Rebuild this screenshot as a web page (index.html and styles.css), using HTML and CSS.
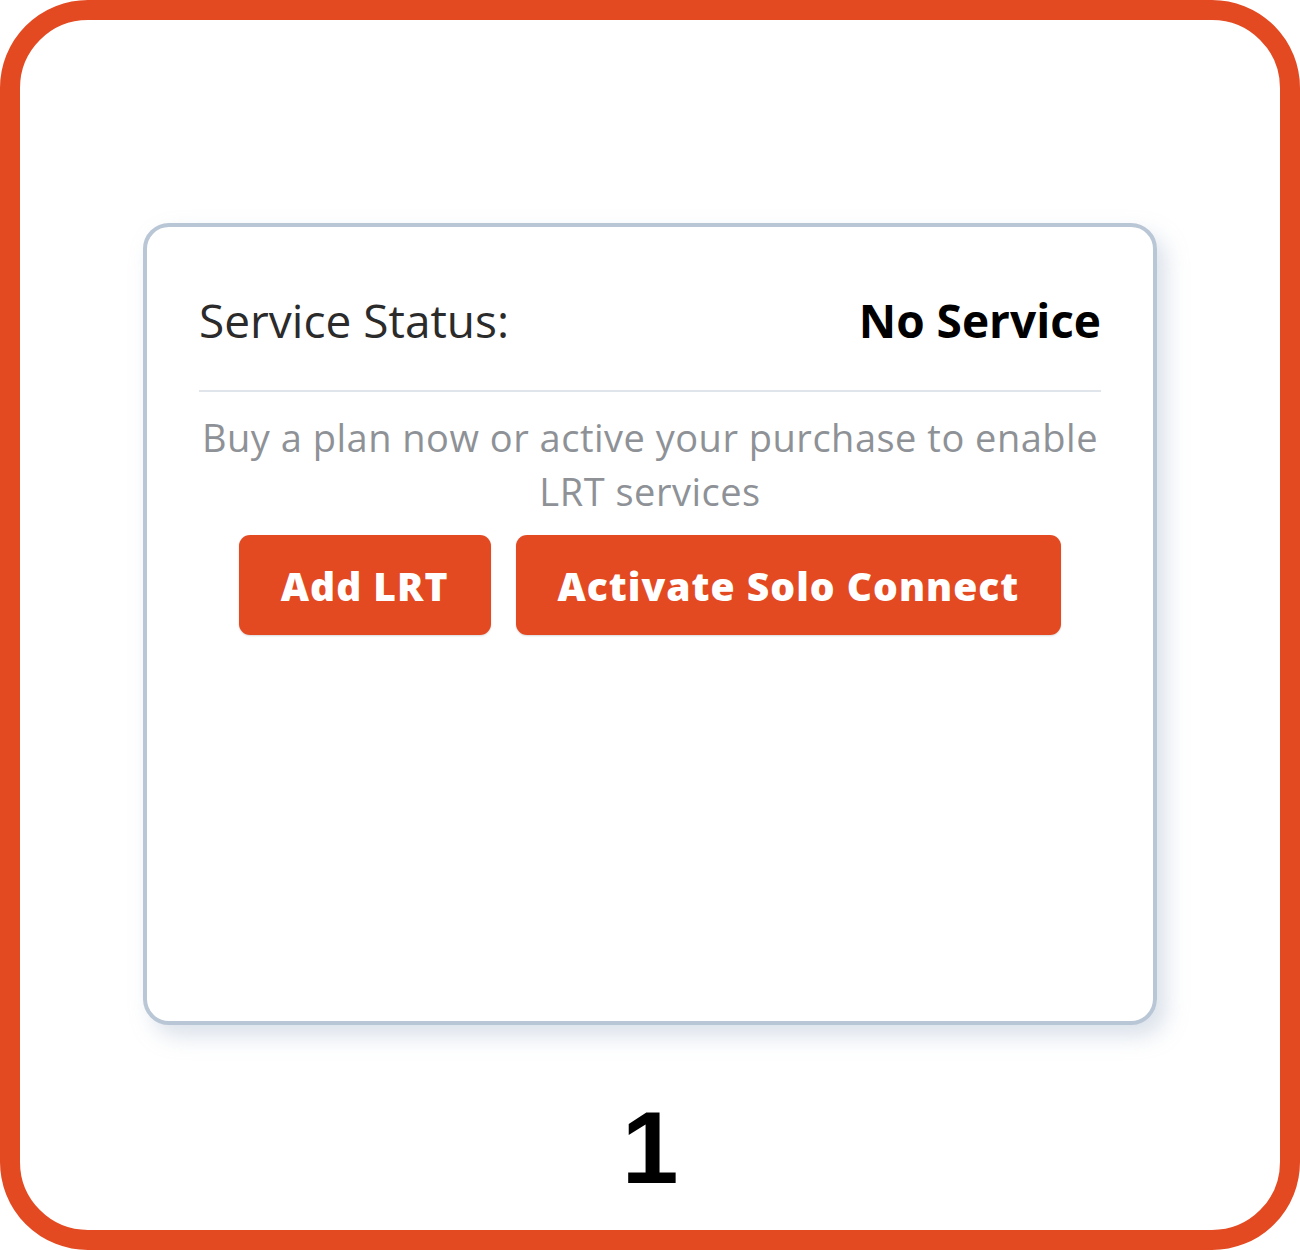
FILE: index.html
```html
<!DOCTYPE html>
<html>
<head>
<meta charset="utf-8">
<link rel="stylesheet" href="styles.css">
</head>
<body>
<div class="frame">
  <div class="card">
    <div class="status-row">
      <span class="status-label">Service Status:</span>
      <span class="status-value">No Service</span>
    </div>
    <div class="divider"></div>
    <p class="message">Buy a plan now or active your purchase to enable LRT services</p>
    <div class="actions">
      <button class="btn">Add LRT</button>
      <button class="btn">Activate Solo Connect</button>
    </div>
  </div>
  <div class="step">1</div>
</div>
</body>
</html>
```

FILE: styles.css
```css
html, body {
  margin: 0;
  padding: 0;
  background: #ffffff;
}

.frame {
  box-sizing: border-box;
  width: 1300px;
  height: 1250px;
  border: 20px solid #e34a22;
  border-radius: 88px;
  display: flex;
  flex-direction: column;
  align-items: center;
  padding-top: 203px;
}

.card {
  box-sizing: border-box;
  width: 1014px;
  height: 802px;
  border: 4px solid #b9c6d5;
  border-radius: 26px;
  box-shadow: 9px 11px 22px rgba(150, 170, 195, 0.35);
  padding: 45px 52px 0 52px;
  font-family: "Open Sans", "Noto Sans", sans-serif;
  display: flex;
  flex-direction: column;
}

.status-row {
  display: flex;
  justify-content: space-between;
  align-items: center;
  height: 96px;
}

.status-label {
  font-size: 46px;
  color: #2b2b2b;
}

.status-value {
  font-size: 46px;
  font-weight: 700;
  color: #000000;
}

.divider {
  height: 2px;
  background: #e0e5eb;
  margin-top: 22px;
}

.message {
  margin: 18px 0 0 0;
  text-align: center;
  font-size: 38px;
  line-height: 54px;
  letter-spacing: 0.5px;
  color: #8e9297;
}

.actions {
  display: flex;
  justify-content: center;
  gap: 25px;
  margin-top: 17px;
}

.btn {
  height: 100px;
  border: none;
  border-radius: 11px;
  background: #e34a22;
  color: #ffffff;
  font-family: "Open Sans", "Noto Sans", sans-serif;
  font-weight: 800;
  font-size: 39px;
  letter-spacing: 1px;
  padding: 0 42px;
  box-shadow: 0 1px 2px rgba(0,0,0,0.15);
}

.step {
  margin-top: 72px;
  font-family: "Liberation Sans", Arial, sans-serif;
  font-weight: 700;
  font-size: 102px;
  line-height: 1;
  color: #000000;
}
```
